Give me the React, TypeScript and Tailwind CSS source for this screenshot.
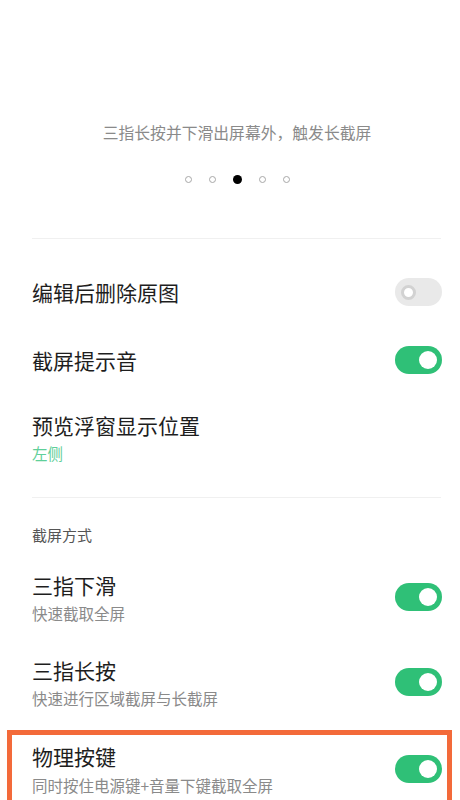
import React from 'react';

const Toggle: React.FC<{ on: boolean }> = ({ on }) => {
  if (on) {
    return (
      <div className="flex h-[28px] w-[47px] shrink-0 items-center justify-end rounded-full bg-[#2fc077] pr-[5px]">
        <div className="size-[18px] rounded-full bg-white" />
      </div>
    );
  }
  return (
    <div className="flex h-[28px] w-[47px] shrink-0 items-center rounded-full bg-[#e9e9e9] pl-[6px]">
      <div className="size-[15px] rounded-full border-[3px] border-[#d2d2d2] bg-white" />
    </div>
  );
};

const Dots: React.FC = () => (
  <div className="mt-[31px] flex h-[9px] items-center justify-center gap-[17px] pl-[14px]">
    {[0, 1, 2, 3, 4].map((i) =>
      i === 2 ? (
        <div key={i} className="size-[9px] rounded-full bg-black" />
      ) : (
        <div key={i} className="size-[7px] rounded-full border border-[#a8a8a8]" />
      )
    )}
  </div>
);

const App: React.FC = () => {
  return (
    <div
      className="h-[800px] w-[460px] overflow-hidden bg-white"
      style={{ fontFamily: '"Noto Sans CJK SC", "Noto Sans", sans-serif' }}
    >
      <div className="pl-[14px] pt-[122px] text-center text-[15.8px] leading-[22px] text-[#8a8a8a]">
        三指长按并下滑出屏幕外，触发长截屏
      </div>
      <Dots />

      <div className="ml-[32px] mr-[19px] mt-[54px] h-px bg-[#f0f0f0]" />

      <div className="mt-[19px] flex h-[68px] items-center justify-between pl-[32px] pr-[18px]">
        <span className="text-[21px] leading-[28px] text-[#1e1e1e]">编辑后删除原图</span>
        <Toggle on={false} />
      </div>
      <div className="flex h-[68px] items-center justify-between pl-[32px] pr-[18px]">
        <span className="text-[21px] leading-[28px] text-[#1e1e1e]">截屏提示音</span>
        <Toggle on />
      </div>
      <div className="pl-[32px] pr-[18px] pt-[17px]">
        <div className="text-[21px] leading-[28px] text-[#1e1e1e]">预览浮窗显示位置</div>
        <div className="mt-[4px] text-[15.5px] leading-[20px] text-[#5fcf99]">左侧</div>
      </div>

      <div className="ml-[32px] mr-[19px] mt-[34px] h-px bg-[#f0f0f0]" />

      <div className="mt-[27px] pl-[32px] text-[15px] leading-[20px] text-[#555]">截屏方式</div>

      <div className="mt-[26px] flex items-center justify-between pl-[32px] pr-[18px]">
        <div>
          <div className="text-[21px] leading-[28px] text-[#1e1e1e]">三指下滑</div>
          <div className="mt-[4px] text-[15.5px] leading-[20px] text-[#8a8a8a]">快速截取全屏</div>
        </div>
        <Toggle on />
      </div>
      <div className="mt-[33px] flex items-center justify-between pl-[32px] pr-[18px]">
        <div>
          <div className="text-[21px] leading-[28px] text-[#1e1e1e]">三指长按</div>
          <div className="mt-[4px] text-[15.5px] leading-[20px] text-[#8a8a8a]">快速进行区域截屏与长截屏</div>
        </div>
        <Toggle on />
      </div>

      <div className="ml-[7px] mr-[8px] mt-[22px] h-[120px] border-[5px] border-b-0 border-[#f36a3a] pl-[20px] pr-[5px] pt-[7px]">
        <div className="flex items-center justify-between">
          <div>
            <div className="text-[21px] leading-[28px] text-[#1e1e1e]">物理按键</div>
            <div className="mt-[5px] text-[15.5px] leading-[20px] text-[#8a8a8a]">
              同时按住电源键+音量下键截取全屏
            </div>
          </div>
          <Toggle on />
        </div>
      </div>
    </div>
  );
};

export default App;
